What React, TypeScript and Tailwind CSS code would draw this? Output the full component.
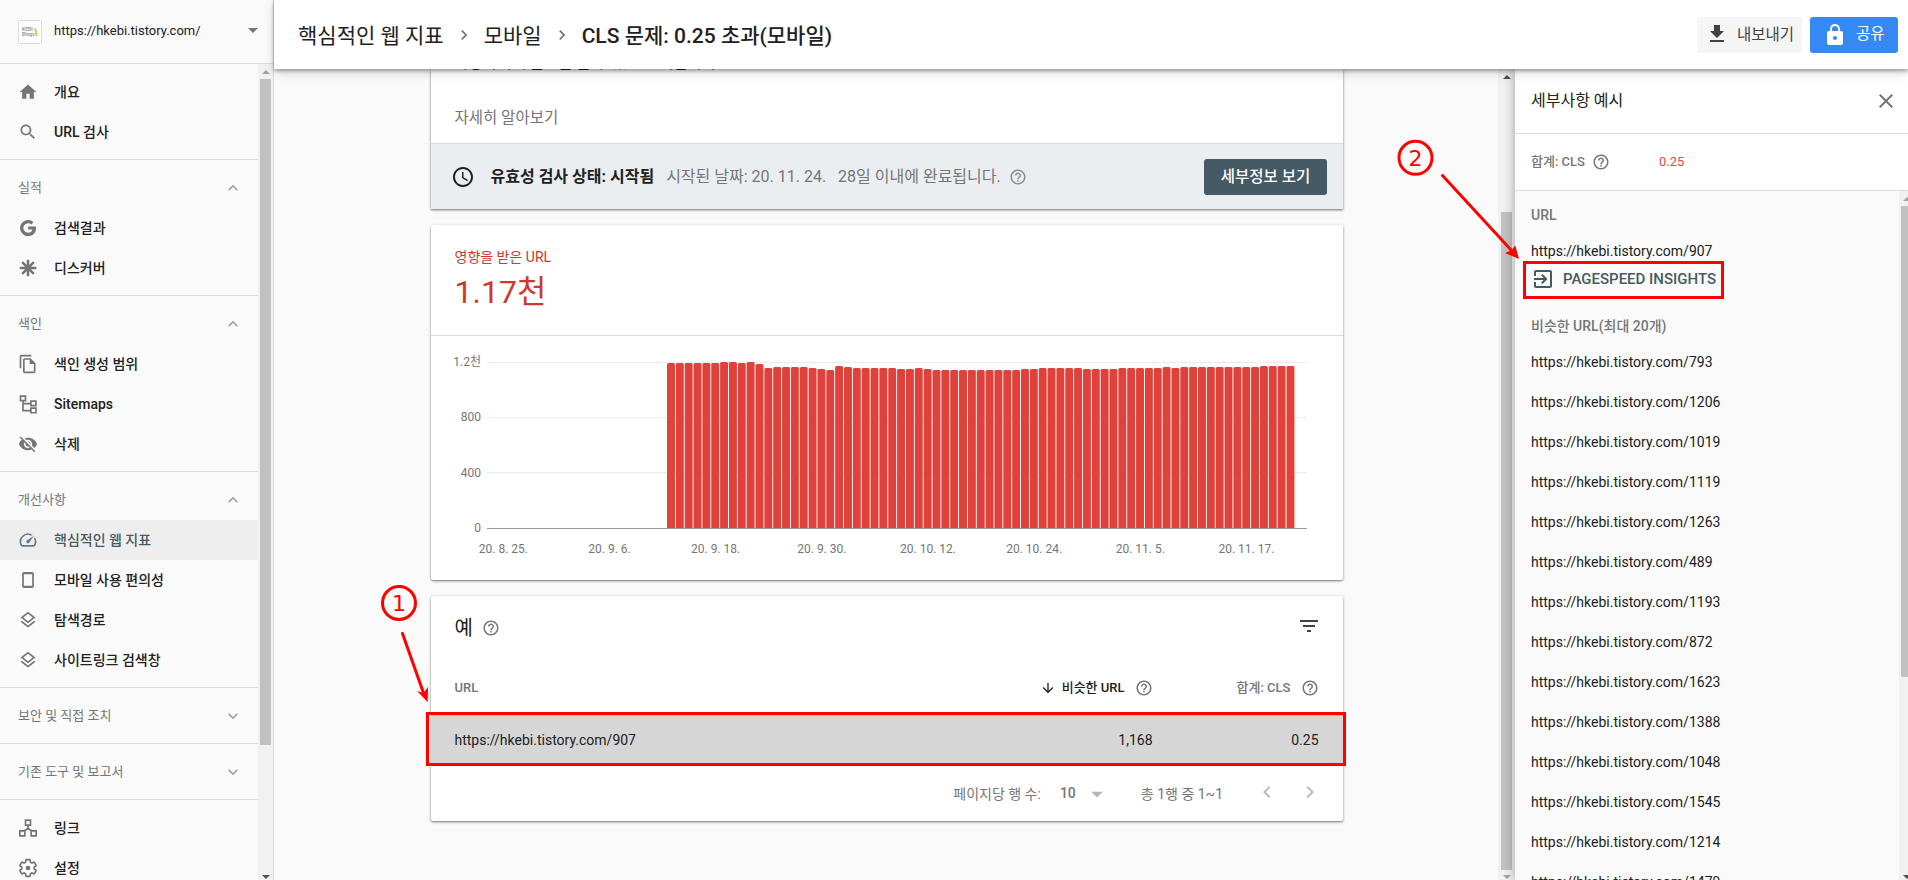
import type { ReactNode } from 'react';

const paths = {
  home: 'M10 20v-6h4v6h5v-8h3L12 3 2 12h3v8z',
  search:
    'M15.5 14h-.79l-.28-.27C15.41 12.59 16 11.11 16 9.5 16 5.91 13.09 3 9.5 3S3 5.91 3 9.5 5.91 16 9.5 16c1.61 0 3.09-.59 4.23-1.57l.27.28v.79l5 4.99L20.49 19l-4.99-5zm-6 0C7.01 14 5 11.99 5 9.5S7.01 5 9.5 5 14 7.01 14 9.5 11.99 14 9.5 14z',
  copy: 'M16 1H4c-1.1 0-2 .9-2 2v14h2V3h12V1zm-1 4H8c-1.1 0-1.99.9-1.99 2L6 21c0 1.1.89 2 1.99 2H19c1.1 0 2-.9 2-2V11l-6-6zM8 21V7h6v5h5v9H8z',
  hidden:
    'M12 7c2.76 0 5 2.24 5 5 0 .65-.13 1.26-.36 1.83l2.92 2.92c1.51-1.26 2.7-2.89 3.43-4.75-1.73-4.39-6-7.5-11-7.5-1.4 0-2.74.25-3.98.7l2.16 2.16C10.74 7.13 11.35 7 12 7zM2 4.27l2.28 2.28.46.46C3.08 8.3 1.78 10.02 1 12c1.73 4.39 6 7.5 11 7.5 1.55 0 3.03-.3 4.38-.84l.42.42L19.73 22 21 20.73 3.27 3 2 4.27zM7.53 9.8l1.55 1.55c-.05.21-.08.43-.08.65 0 1.66 1.34 3 3 3 .22 0 .44-.03.65-.08l1.55 1.55c-.67.33-1.41.53-2.2.53-2.76 0-5-2.24-5-5 0-.79.2-1.53.53-2.2zm4.31-.78l3.15 3.15.02-.16c0-1.66-1.34-3-3-3l-.17.01z',
  speed:
    'M20.38 8.57l-1.23 1.85a8 8 0 0 1-.22 7.58H5.07A8 8 0 0 1 15.58 6.85l1.85-1.23A10 10 0 0 0 3.35 19a2 2 0 0 0 1.72 1h13.85a2 2 0 0 0 1.74-1 10 10 0 0 0-.27-10.44zm-9.79 6.84a2 2 0 0 0 2.83 0l5.66-8.49-8.49 5.66a2 2 0 0 0 0 2.83z',
  phone: 'M17 2.4H7c-1.1 0-2 .9-2 2v15.2c0 1.1.9 2 2 2h10c1.1 0 2-.9 2-2V4.4c0-1.1-.9-2-2-2zM17 18.8H7V5.2h10v13.6z',
  layers:
    'M11.99 18.54l-7.37-5.73L3 14.07l9 7 9-7-1.63-1.27-7.38 5.74zM12 16l7.36-5.73L21 9l-9-7-9 7 1.63 1.27L12 16zm0-11.47L17.74 9 12 13.47 6.26 9 12 4.53z',
  up: 'M12 8l-6 6 1.41 1.41L12 10.83l4.59 4.58L18 14z',
  down: 'M16.59 8.59L12 13.17 7.41 8.59 6 10l6 6 6-6z',
  left: 'M15.41 7.41L14 6l-6 6 6 6 1.41-1.41L10.83 12z',
  right: 'M10 6L8.59 7.41 13.17 12l-4.58 4.59L10 18l6-6z',
  caret: 'M7 10l5 5 5-5z',
  download: 'M19 9h-4V3H9v6H5l7 7 7-7zM5 18v2h14v-2H5z',
  lock: 'M18 8h-1V6c0-2.76-2.24-5-5-5S7 3.24 7 6v2H6c-1.1 0-2 .9-2 2v10c0 1.1.9 2 2 2h12c1.1 0 2-.9 2-2V10c0-1.1-.9-2-2-2zm-6 9c-1.1 0-2-.9-2-2s.9-2 2-2 2 .9 2 2-.9 2-2 2zm3.1-9H8.9V6c0-1.71 1.39-3.1 3.1-3.1 1.71 0 3.1 1.39 3.1 3.1v2z',
  help: 'M11 18h2v-2h-2v2zm1-16C6.48 2 2 6.48 2 12s4.48 10 10 10 10-4.48 10-10S17.52 2 12 2zm0 18c-4.41 0-8-3.59-8-8s3.59-8 8-8 8 3.59 8 8-3.59 8-8 8zm0-14c-2.21 0-4 1.79-4 4h2c0-1.1.9-2 2-2s2 .9 2 2c0 2-3 1.75-3 5h2c0-2.25 3-2.5 3-5 0-2.21-1.79-4-4-4z',
  clock:
    'M11.99 2C6.47 2 2 6.48 2 12s4.47 10 9.99 10C17.52 22 22 17.52 22 12S17.52 2 11.99 2zM12 20c-4.42 0-8-3.58-8-8s3.58-8 8-8 8 3.58 8 8-3.58 8-8 8zm.5-13H11v6l5.25 3.15.75-1.23-4.5-2.67z',
  filter: 'M10 18h4v-2h-4v2zM3 6v2h18V6H3zm3 7h12v-2H6v2z',
  arrowDown: 'M20 12l-1.41-1.41L13 16.17V4h-2v12.17l-5.58-5.59L4 12l8 8 8-8z',
  close: 'M19 6.41L17.59 5 12 10.59 6.41 5 5 6.41 10.59 12 5 17.59 6.41 19 12 13.41 17.59 19 19 17.59 13.41 12z',
  exit: 'M10.09 15.59L11.5 17l5-5-5-5-1.41 1.41L12.67 11H3v2h9.67l-2.58 2.59zM19 3H5c-1.11 0-2 .9-2 2v4h2V5h14v14H5v-4H3v4c0 1.1.89 2 2 2h14c1.1 0 2-.9 2-2V5c0-1.1-.9-2-2-2z',
  google:
    'M12.2 10.2v3.6h5.1c-.5 2.4-2.5 3.9-5.1 3.9a5.7 5.7 0 1 1 3.7-10l2.7-2.7A9.6 9.6 0 1 0 12.2 21.6c5.5 0 9.4-3.9 9.4-9.4 0-.7-.1-1.4-.2-2z',
  gear: 'M19.43 12.98c.04-.32.07-.64.07-.98s-.03-.66-.07-.98l2.11-1.65c.19-.15.24-.42.12-.64l-2-3.46c-.12-.22-.39-.3-.61-.22l-2.49 1c-.52-.4-1.08-.73-1.69-.98l-.38-2.65C14.46 2.18 14.25 2 14 2h-4c-.25 0-.46.18-.49.42l-.38 2.65c-.61.25-1.17.59-1.69.98l-2.49-1c-.23-.09-.49 0-.61.22l-2 3.46c-.13.22-.07.49.12.64l2.11 1.65c-.04.32-.07.65-.07.98s.03.66.07.98l-2.11 1.65c-.19.15-.24.42-.12.64l2 3.46c.12.22.39.3.61.22l2.49-1c.52.4 1.08.73 1.69.98l.38 2.65c.03.24.24.42.49.42h4c.25 0 .46-.18.49-.42l.38-2.65c.61-.25 1.17-.59 1.69-.98l2.49 1c.23.09.49 0 .61-.22l2-3.46c.12-.22.07-.49-.12-.64l-2.11-1.65z',
};

type IconName = keyof typeof paths;

function Icon({ name, className = 'size-5' }: { name: IconName; className?: string }) {
  return (
    <svg viewBox="0 0 24 24" fill="currentColor" className={`shrink-0 ${className}`}>
      <path d={paths[name]} />
    </svg>
  );
}

const Stroked = ({ children }: { children: ReactNode }) => (
  <svg viewBox="0 0 24 24" fill="none" stroke="currentColor" strokeWidth={2} className="size-5 shrink-0">
    {children}
  </svg>
);

const Asterisk = () => (
  <Stroked>
    <path strokeWidth={3} d="M12 2v20M2 12h20M5 5l14 14M19 5L5 19" />
  </Stroked>
);

const Tree = () => (
  <Stroked>
    <path d="M3 2.5h6V8H3zM15.5 8.5h6V14h-6zM15.5 17h6v5.5h-6zM6 8v12h9M6 11.5h9" />
  </Stroked>
);

const Links = () => (
  <Stroked>
    <path d="M9 2.5h6v6H9zM2.2 15.5h6v6h-6zM15.8 15.5h6v6h-6zM12 8.5v4l-5 3M12 12.5l5 3" />
  </Stroked>
);

const Gear = () => (
  <Stroked>
    <path d={paths.gear} />
    <circle cx="12" cy="12" r="2.8" fill="currentColor" stroke="none" />
  </Stroked>
);

type Item = { label: string; icon: ReactNode; active?: boolean };

const sections: { title?: string; open?: boolean; items: Item[] }[] = [
  {
    items: [
      { label: '개요', icon: <Icon name="home" /> },
      { label: 'URL 검사', icon: <Icon name="search" /> },
    ],
  },
  {
    title: '실적',
    open: true,
    items: [
      { label: '검색결과', icon: <Icon name="google" /> },
      { label: '디스커버', icon: <Asterisk /> },
    ],
  },
  {
    title: '색인',
    open: true,
    items: [
      { label: '색인 생성 범위', icon: <Icon name="copy" /> },
      { label: 'Sitemaps', icon: <Tree /> },
      { label: '삭제', icon: <Icon name="hidden" /> },
    ],
  },
  {
    title: '개선사항',
    open: true,
    items: [
      { label: '핵심적인 웹 지표', icon: <Icon name="speed" />, active: true },
      { label: '모바일 사용 편의성', icon: <Icon name="phone" /> },
      { label: '탐색경로', icon: <Icon name="layers" /> },
      { label: '사이트링크 검색창', icon: <Icon name="layers" /> },
    ],
  },
  { title: '보안 및 직접 조치', items: [] },
  { title: '기존 도구 및 보고서', items: [] },
  {
    items: [
      { label: '링크', icon: <Links /> },
      { label: '설정', icon: <Gear /> },
    ],
  },
];

// y of each bar's top inside the plot, one bar per day
const tops = [
  ...[363, 363, 363, 363, 363, 363, 362, 362, 363, 362, 364, 368, 367, 367, 367, 367, 368, 369, 370, 366],
  ...[367, 368, 368, 368, 368, 368, 369, 369, 368, 369, 370, 370, 370, 370, 370, 370, 370, 370, 370, 370],
  ...[369, 369, 368, 368, 368, 368, 368, 369, 369, 369, 369, 368, 368, 368, 368, 368, 367, 368, 367, 367],
  ...[367, 367, 367, 367, 367, 367, 367, 366, 366, 366, 366],
];

const dates = ['20. 8. 25.', '20. 9. 6.', '20. 9. 18.', '20. 9. 30.', '20. 10. 12.', '20. 10. 24.', '20. 11. 5.', '20. 11. 17.'];

const similar = [793, 1206, 1019, 1119, 1263, 489, 1193, 872, 1623, 1388, 1048, 1545, 1214, 1479];

const card = 'bg-white shadow-[0_1px_2px_rgba(0,0,0,0.45),0_1px_4px_rgba(0,0,0,0.15)]';

function Triangle({ up = false, className }: { up?: boolean; className: string }) {
  return (
    <svg viewBox="0 0 8 4" className={`h-1 w-2 shrink-0 ${className}`} fill="currentColor">
      <path d={up ? 'M0 4L4 0l4 4z' : 'M0 0h8L4 4z'} />
    </svg>
  );
}

function Sidebar() {
  return (
    <aside className="flex h-full w-[274px] shrink-0 flex-col border-r border-[#d8d8d8] bg-[#fafafa]">
      <div className="flex h-16 shrink-0 items-center border-b border-[#dcdcdc] pl-[18px]">
        <div className="relative flex size-6 shrink-0 flex-col justify-center rounded-[2px] border border-[#dcdcdc] bg-white pl-[3px] text-[5px] leading-[5px] font-bold text-[#999]">
          <span>KEBI</span>
          <span>Blogs</span>
          <span className="absolute top-[7px] right-[4px] h-2 w-[2px] -rotate-12 bg-[#f0c040]" />
        </div>
        <span className="mb-0.5 ml-3 flex-1 text-[13px] text-[#212121]">https://hkebi.tistory.com/</span>
        <svg viewBox="0 0 10 5" className="mr-[15px] mb-0.5 h-[5px] w-[10px] text-[#757575]" fill="currentColor">
          <path d="M0 0h10L5 5z" />
        </svg>
      </div>
      <div className="flex min-h-0 flex-1">
        <nav className="min-w-0 flex-1 overflow-hidden">
          {sections.map((section, i) => (
            <div key={i} className="border-b border-[#dcdcdc] pt-2 pb-[7px]">
              {section.title && (
                <div className="flex h-10 items-center justify-between pr-[15px] pl-[18px] text-[13px] text-[#757575]">
                  {section.title}
                  <Icon name={section.open ? 'up' : 'down'} className="size-5 text-[#9e9e9e]" />
                </div>
              )}
              {section.items.map((item) => (
                <div
                  key={item.label}
                  className={`flex h-10 items-center gap-4 pl-[18px] text-sm font-medium ${
                    item.active ? 'bg-[#eeeeee] text-[#455a64]' : 'text-[#212121]'
                  }`}
                >
                  <span className={item.active ? 'text-[#607d8b]' : 'text-[#757575]'}>{item.icon}</span>
                  {item.label}
                </div>
              ))}
            </div>
          ))}
        </nav>
        <div className="flex w-[15px] shrink-0 flex-col items-center bg-[#f1f1f1]">
          <Triangle up className="mt-1.5 mb-[5px] text-[#a3a3a3]" />
          <div className="h-[666px] w-[11px] bg-[#c1c1c1]" />
          <Triangle className="mt-auto mb-px text-[#505050]" />
        </div>
      </div>
    </aside>
  );
}

function Header() {
  return (
    <header className="relative z-20 flex h-[69px] shrink-0 items-center bg-white pr-[10px] pl-6 shadow-[0_2px_4px_rgba(0,0,0,0.35),0_4px_12px_rgba(0,0,0,0.12)]">
      <div className="flex flex-1 items-center text-[21px] text-[#212121]">
        <span className="pt-1">핵심적인 웹 지표</span>
        <Icon name="right" className="mx-[10px] size-5 text-[#757575]" />
        <span className="pt-1">모바일</span>
        <Icon name="right" className="mx-[10px] size-5 text-[#757575]" />
        <span className="pt-1 font-medium">CLS 문제: 0.25 초과(모바일)</span>
      </div>
      <button className="mr-2 flex h-9 w-[105px] items-center rounded-[3px] bg-[#f5f5f5] pl-2 text-[15.5px] text-[#424242]">
        <Icon name="download" className="mr-2 mb-0.5 size-6" />
        <span className="pt-[3px]">내보내기</span>
      </button>
      <button className="flex h-9 w-22 items-center rounded-[3px] bg-[#3688f2] pl-[13px] text-[15.5px] text-white">
        <Icon name="lock" className="mr-[9px] size-6" />
        공유
      </button>
    </header>
  );
}

function StatusCard() {
  return (
    <section className={`${card} flex h-[140px] flex-col overflow-hidden`}>
      <div className="flex h-[75px] flex-col border-b border-[#dadada] pl-[23.5px]">
        <div className="-mt-4 mb-[35px] h-5 shrink-0 text-[15.5px] leading-5 text-[#212121]">
          사용자에게 불편을 줄 수 있는 문제입니다
        </div>
        <div className="h-5 shrink-0 text-[15.5px] leading-5 text-[#757575]">자세히 알아보기</div>
      </div>
      <div className="flex flex-1 items-center bg-[#ebeef1] pr-4 pl-[19.5px] text-base text-[#757575]">
        <Icon name="clock" className="mr-4 size-6 text-[#212121]" />
        <span className="font-bold text-[#212121]">유효성 검사 상태: 시작됨</span>
        <span className="ml-3">시작된 날짜: 20. 11. 24.</span>
        <span className="ml-3">28일 이내에 완료됩니다.</span>
        <Icon name="help" className="ml-2 size-[18px] text-[#8c8c8c]" />
        <button className="ml-auto h-9 w-[123px] rounded-[3px] bg-[#455a64] pt-0.5 text-[15.5px] font-medium text-white">
          세부정보 보기
        </button>
      </div>
    </section>
  );
}

function ChartCard() {
  return (
    <section className={`${card} mt-4 h-[355px] rounded-[2px]`}>
      <div className="h-[111px] border-b border-[#dcdcdc] pt-[22px] pl-[23.5px] text-[#cd3a2d]">
        <div className="h-5 text-sm leading-5">영향을 받은 URL</div>
        <div className="mt-[5px] h-10 text-[32px] leading-10">1.17천</div>
      </div>
      {/* one user unit per pixel, origin shared with the bar tops above */}
      <svg viewBox="431 336 912 244" className="block h-[244px] w-[912px]">
        {[362.5, 417.5, 472.5].map((y) => (
          <path key={y} d={`M487 ${y}H1307`} stroke="#ebebeb" />
        ))}
        {tops.map((y, i) => {
          const x = 667 + i * 8.85;
          return (
            <path
              key={i}
              d={`M${x} 528V${y + 1.5}q0-1.5 1.5-1.5h4.95q1.5 0 1.5 1.5V528z`}
              fill="#df423a"
            />
          );
        })}
        <path d="M487 528.5H1307" stroke="#999" />
        <g fill="#757575" fontSize="12" textAnchor="end">
          <text x="481" y="365.5">1.2천</text>
          <text x="481" y="421">800</text>
          <text x="481" y="476.5">400</text>
          <text x="481" y="532">0</text>
        </g>
        <g fill="#757575" fontSize="12" textAnchor="middle">
          {dates.map((date, i) => (
            <text key={date} x={503.4 + i * 106.15} y="553">
              {date}
            </text>
          ))}
        </g>
      </svg>
    </section>
  );
}

function ExamplesCard() {
  return (
    <section className={`${card} mt-4 h-[225px] rounded-[2px]`}>
      <div className="flex h-[61px] items-center pr-[22.5px] pl-[23.5px] text-xl text-[#212121]">
        <span className="pt-0.5">예</span>
        <Icon name="help" className="mt-[3px] ml-[9px] size-[18px] text-[#757575]" />
        <Icon name="filter" className="mb-0.5 ml-auto size-6 text-[#424242]" />
      </div>
      <div className="flex h-[59px] items-center border-b border-[#bdbdbd] pt-[3px] pr-[24.5px] pl-[23.5px] text-[13px] font-medium text-[#757575]">
        <span className="flex-1">URL</span>
        <span className="flex items-center text-[#212121]">
          <Icon name="arrowDown" className="mr-1.5 size-4" />
          비슷한 URL
        </span>
        <Icon name="help" className="ml-2.5 size-[18px]" />
        <span className="flex w-[166px] items-center justify-end">
          합계: CLS
          <Icon name="help" className="ml-2.5 size-[18px]" />
        </span>
      </div>
      <div className="flex h-[47px] items-center bg-[#d6d6d6] pr-[24.5px] pl-[23.5px] text-sm text-[#212121]">
        <span className="flex-1">https://hkebi.tistory.com/907</span>
        <span>1,168</span>
        <span className="w-[166px] text-right">0.25</span>
      </div>
      <div className="flex h-[58px] items-center justify-end pr-[21px] text-sm text-[#757575]">
        <span className="mr-[19px] pt-[3px]">페이지당 행 수:</span>
        <span className="mr-[7px] pt-px font-medium">10</span>
        <Icon name="caret" className="mt-[3px] mr-[30px] size-7 text-[#b5b5b5]" />
        <span className="mr-8 pt-[3px]">총 1행 중 1~1</span>
        <Icon name="left" className="mr-[19px] size-6 text-[#bdbdbd]" />
        <Icon name="right" className="size-6 text-[#bdbdbd]" />
      </div>
    </section>
  );
}

function DetailPanel() {
  return (
    <aside className="relative z-10 flex w-[393px] shrink-0 flex-col bg-white shadow-[-1px_0_10px_rgba(0,0,0,0.3)]">
      <div className="flex h-[65px] shrink-0 items-center justify-between border-b border-[#dcdcdc] pr-[10px] pl-4 text-base text-[#212121]">
        세부사항 예시
        <Icon name="close" className="size-6 text-[#757575]" />
      </div>
      <div className="flex h-[57px] shrink-0 items-center border-b border-[#dcdcdc] pl-4 text-[13px] font-medium text-[#757575]">
        합계: CLS
        <Icon name="help" className="ml-[7px] size-[18px]" />
        <span className="ml-[49px] font-normal text-[#e5493f]">0.25</span>
      </div>
      <div className="flex min-h-0 flex-1 overflow-hidden bg-[#fafafa]">
        <div className="flex-1 pt-[14px] pl-4 text-sm text-[#212121]">
          <div className="h-5 leading-5 font-medium text-[#757575]">URL</div>
          <div className="mt-4 h-5 leading-5">https://hkebi.tistory.com/907</div>
          <div className="mt-1.5 flex h-6 items-center text-[15px] font-medium text-[#455a64]">
            <Icon name="exit" className="mr-2 size-6" />
            <span className="pt-0.5">PAGESPEED INSIGHTS</span>
          </div>
          <div className="mt-[25px] h-5 leading-5 font-medium text-[#757575]">비슷한 URL(최대 20개)</div>
          <ul className="mt-1.5">
            {similar.map((id) => (
              <li key={id} className="h-10 leading-10">
                https://hkebi.tistory.com/{id}
              </li>
            ))}
          </ul>
        </div>
        <div className="flex w-[9px] shrink-0 flex-col bg-[#f1f1f1]">
          <Triangle up className="mt-1.5 mb-[5px] ml-1 text-[#a3a3a3]" />
          <div className="ml-0.5 h-[471px] bg-[#c1c1c1]" />
          <Triangle className="mt-auto mb-px ml-1 text-[#505050]" />
        </div>
      </div>
    </aside>
  );
}

// red call-outs drawn over the page
function Callouts() {
  return (
    <svg viewBox="0 0 1908 880" className="pointer-events-none absolute inset-0 z-30 h-[880px] w-[1908px]" fill="none" stroke="#f00" strokeWidth={3}>
      <rect x="427.5" y="713.5" width="917" height="51" />
      <rect x="1524.5" y="262.5" width="198" height="35" />
      <circle cx="399" cy="603" r="16.5" />
      <circle cx="1415.5" cy="157.8" r="16.5" />
      <path d="M402.5 633.5L423.5 693M1442.5 175.5L1512 251" strokeLinecap="round" />
      <g fill="#f00" stroke="none">
        <path d="M427.7 702L417 691l6.5 2L428 687zM1519 259l-14-6 6.3-2.5 4-5z" />
        <g className="font-['DejaVu_Sans']" fontSize="22" textAnchor="middle">
          <text x="399" y="611">1</text>
          <text x="1415.5" y="165.5">2</text>
        </g>
      </g>
    </svg>
  );
}

export default function App() {
  return (
    <div className="relative flex h-[880px] w-full overflow-hidden bg-[#fafafa] font-[Roboto,'Noto_Sans_CJK_KR',sans-serif]">
      <Sidebar />
      <div className="flex min-w-0 flex-1 flex-col">
        <Header />
        <div className="flex min-h-0 flex-1">
          <main className="min-w-0 flex-1 overflow-hidden pr-[155px] pl-[157px]">
            <StatusCard />
            <ChartCard />
            <ExamplesCard />
          </main>
          <div className="flex w-[17px] shrink-0 flex-col items-center bg-[#f1f1f1]">
            <Triangle up className="mt-1.5 text-[#505050]" />
            <div className="mt-[133px] h-[658px] w-[11px] bg-[#c1c1c1]" />
            <Triangle className="mt-auto mb-px text-[#a3a3a3]" />
          </div>
          <DetailPanel />
        </div>
      </div>
      <Callouts />
    </div>
  );
}
